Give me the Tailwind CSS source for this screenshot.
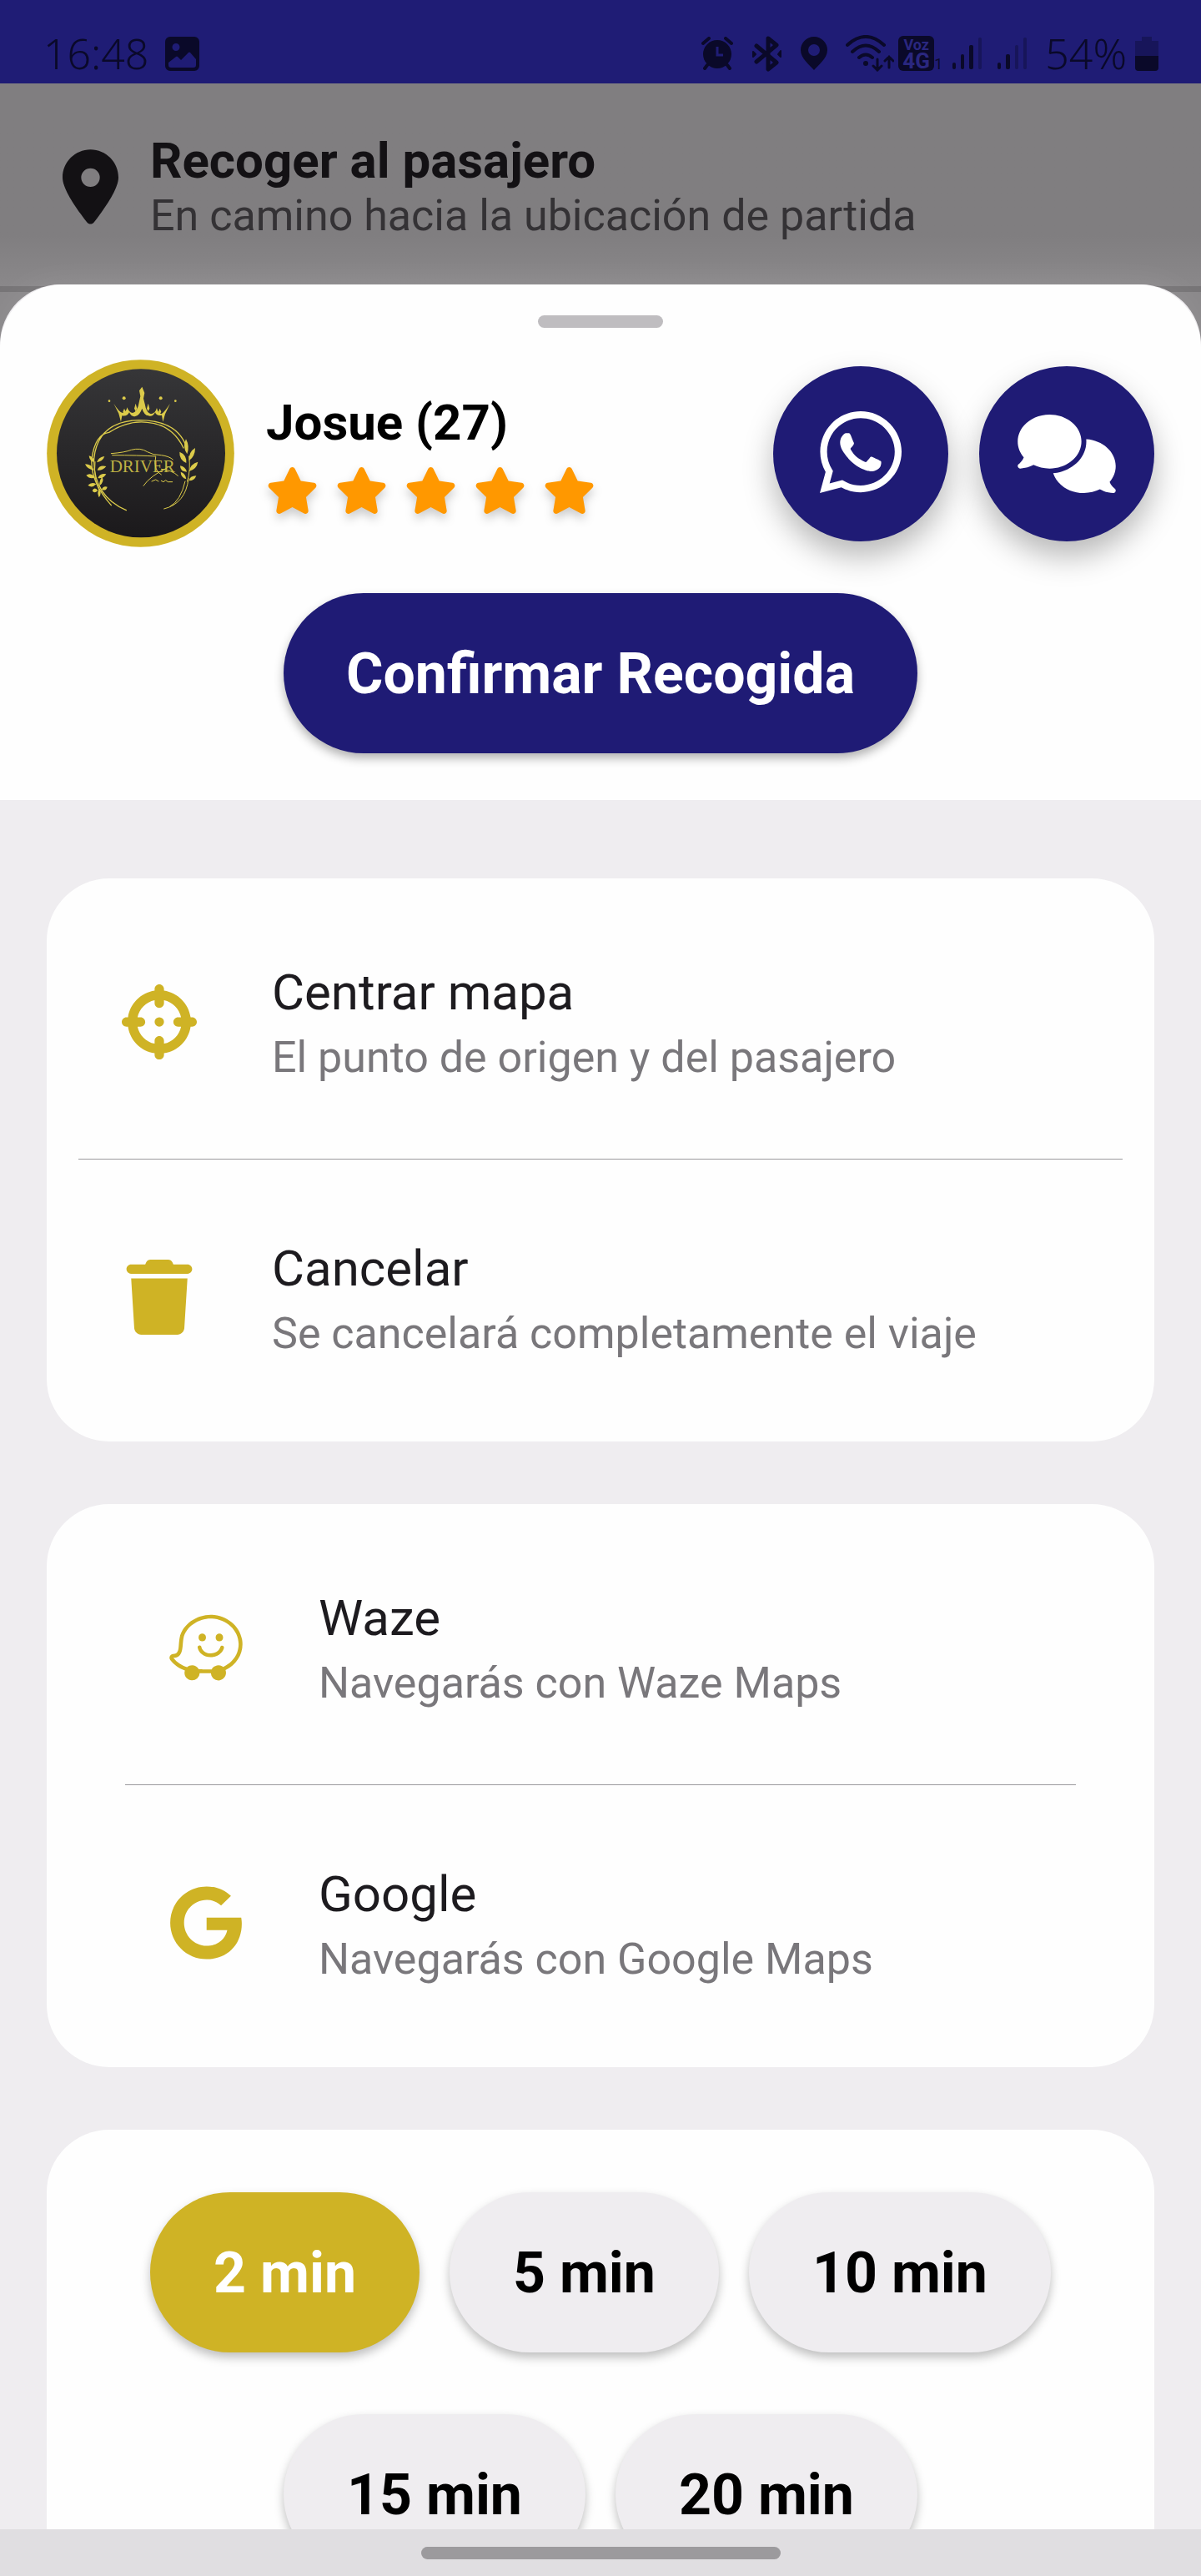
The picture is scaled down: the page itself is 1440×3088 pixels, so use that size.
<!DOCTYPE html>
<html lang="es">
<head>
    <meta charset="UTF-8">
    <meta name="viewport" content="width=device-width, initial-scale=1.0">
    <title>Recoger al pasajero</title>
    <script src="https://cdn.jsdelivr.net/npm/@tailwindcss/browser@4"></script>
</head>
<body class="h-screen overflow-hidden flex flex-col bg-[#efedf0] font-['Roboto',sans-serif]">

    <!-- Status bar -->
    <div class="h-[100px] shrink-0 bg-[#1f1c75] text-[#0a0929] flex justify-between items-center pt-7 pl-[52px] pr-[51px]">
        <div class="flex items-center gap-5">
            <span class="font-['Noto_Sans',sans-serif] text-[50px] leading-none font-light">16:48</span>
            <svg class="w-[41px] h-[41px]" viewBox="0 0 41 41" fill="currentColor" fill-rule="evenodd">
                <path d="M6 0h29a6 6 0 0 1 6 6v29a6 6 0 0 1-6 6H6a6 6 0 0 1-6-6V6a6 6 0 0 1 6-6zM13 8a4.500 4.500 0 1 0 0 9a4.500 4.500 0 1 0 0-9zM4 34q0 3 3 3h27q3 0 3-3v-7l-7-8q-1-1-2 0l-9 9-4-4q-1-1-2 0l-9 7z"/>
            </svg>
        </div>
        <div class="flex items-center gap-[22px]">
            <!-- Alarm -->
            <svg class="w-[38px] h-[40px]" viewBox="0 0 38 40">
                <circle cx="19" cy="21" r="17" fill="currentColor"/>
                <path d="M2 8l7-6M36 8l-7-6M7 34l-3 4M31 34l3 4" stroke="currentColor" stroke-width="4" stroke-linecap="round"/>
                <path d="M19 12v10h7" stroke="#1f1c75" stroke-width="3" fill="none"/>
            </svg>
            <!-- Bluetooth -->
            <svg class="w-[37px] h-[43px]" viewBox="0 0 37 43" fill="none" stroke="currentColor" stroke-width="5" stroke-linejoin="round" stroke-linecap="round">
                <path d="M6 12l24 20-10 8V3l10 8L6 31"/>
                <path d="M2 19l3 3-3 3zM35 18l-3 4 3 3z" fill="currentColor" stroke-width="2"/>
            </svg>
            <!-- Location -->
            <svg class="w-[32px] h-[40px]" viewBox="0 0 32 40" fill="currentColor" fill-rule="evenodd">
                <path d="M16 0a16 16 0 0 1 16 16c0 10-11 18-16 24C11 34 0 26 0 16A16 16 0 0 1 16 0zM16 9a7 7 0 1 0 0 14a7 7 0 1 0 0-14z"/>
            </svg>
            <div class="flex items-center gap-[5px]">
                <!-- Wifi -->
                <svg class="w-[58px] h-[44px]" viewBox="0 0 58 44" fill="none" stroke="currentColor" stroke-width="4" stroke-linecap="round">
                    <path d="M2 12Q24-8 46 12M8 20Q24 5 40 20M16 27Q24 20 32 27"/>
                    <circle cx="24" cy="34" r="3" fill="currentColor" stroke="none"/>
                    <path d="M38 29v13M33 37l5 5 5-5M52 39V26M47 31l5-5 5 5" stroke-width="3"/>
                </svg>
                <div class="flex items-end">
                    <div class="w-[43px] h-[42px] rounded-md bg-[#0a0929] text-[#2a2780] flex flex-col items-center justify-center font-bold">
                        <span class="text-[18px] leading-[17px]">Voz</span>
                        <span class="text-[26px] leading-[22px]">4G</span>
                    </div>
                    <span class="text-[18px] leading-[16px]">1</span>
                </div>
            </div>
            <div class="flex items-center gap-[19px] -ml-[10px]">
                <svg class="w-[35px] h-[38px]" viewBox="0 0 35 38" fill="currentColor">
                    <rect x="0" y="30" width="4" height="8" rx="2"/>
                    <rect x="10" y="20" width="4" height="18" rx="2"/>
                    <rect x="20" y="9" width="5" height="29" rx="2"/>
                    <rect x="31" y="0" width="4" height="38" rx="2" opacity=".35"/>
                </svg>
                <svg class="w-[35px] h-[38px]" viewBox="0 0 35 38" fill="currentColor">
                    <rect x="0" y="30" width="4" height="8" rx="2"/>
                    <rect x="10" y="20" width="5" height="18" rx="2"/>
                    <rect x="21" y="9" width="4" height="29" rx="2" opacity=".35"/>
                    <rect x="31" y="0" width="4" height="38" rx="2" opacity=".35"/>
                </svg>
            </div>
            <div class="flex items-center gap-[10px]">
                <span class="font-['Noto_Sans',sans-serif] text-[50px] leading-none font-light">54%</span>
                <svg class="w-[28px] h-[41px]" viewBox="0 0 28 41" fill="currentColor">
                    <path d="M8 0h12v5h8v18H0V5h8z" opacity=".35"/>
                    <path d="M0 23h28v14a4 4 0 0 1-4 4H4a4 4 0 0 1-4-4z"/>
                </svg>
            </div>
        </div>
    </div>

    <main class="flex-1 min-h-0 overflow-hidden bg-[#8a888a] flex flex-col">
        <!-- Trip header, dimmed behind the sheet -->
        <header class="shrink-0 flex items-center gap-[38px] pl-[75px] pt-[58px] pb-[54px] bg-linear-to-b from-[#807e80] from-75% to-[#8a888a] border-b-[7px] border-[#767476]">
            <svg class="w-[67px] h-[90px] text-[#131114]" viewBox="0 0 384 512" fill="currentColor"><path d="M215.7 499.2C267 435 384 279.4 384 192C384 86 298 0 192 0S0 86 0 192c0 87.4 117 243 168.3 307.2c12.3 15.3 35.1 15.3 47.4 0zM192 128a64 64 0 1 1 0 128 64 64 0 1 1 0-128z"/></svg>
            <div>
                <h1 class="text-[60px] leading-[70px] font-bold text-[#131114]">Recoger al pasajero</h1>
                <p class="text-[52px] leading-[61px] text-[#343235]">En camino hacia la ubicación de partida</p>
            </div>
        </header>

        <!-- Bottom sheet -->
        <section class="relative -mt-[9px] flex-1 min-h-0 overflow-hidden rounded-t-[72px] bg-[#efedf0] shadow-[0_-4px_40px_rgba(255,255,255,0.08)]">
            <div class="bg-[#fefefe] rounded-t-[76px] pt-[37px] pb-14 px-14">
                <div class="w-[150px] h-[15px] mx-auto rounded-full bg-[#bfbdc0]"></div>

                <div class="mt-[38px] flex items-center justify-between">
                    <div class="flex items-center gap-[38px]">
                        <svg class="w-[225px] h-[225px]" viewBox="48 32 675 675" role="img" aria-label="Driver">
                            <defs>
                                <linearGradient id="logoBg" x1="0" y1="0" x2="0" y2="1">
                                    <stop offset="0" stop-color="#363638"/>
                                    <stop offset="1" stop-color="#1b191b"/>
                                </linearGradient>
                            </defs>
                            <circle cx="385.500" cy="369.500" r="337" fill="#cfb325"/>
                            <circle cx="387" cy="369" r="303" fill="url(#logoBg)"/>
                            <g fill="#dccb4a" stroke="none">
                                <!-- crown -->
                                <path d="M391 130l9 22-4 20 5 20q5 32 22 36 16-2 21-22 4 18 16 22 10-5 32-38l-18 38-8 28-4-24q-18 5-24-10-10 18-24 12-16-2-23-26-8 24-24 28-14 4-22-14-8 16-26 12l-4 22-8-30-18-36q20 32 32 34 14-4 16-20 8 20 20 20 18-4 24-42l4-18-4-20z"/>
                                <circle cx="326" cy="171" r="6"/><circle cx="458" cy="171" r="6"/>
                                <circle cx="273" cy="181" r="4"/><circle cx="511" cy="181" r="4"/>
                                <path d="M368 190l5 18-5 10-5-10zM413 190l5 18-5 10-5-10zM327 208l5 12-5 8-5-8zM455 208l5 12-5 8-5-8z"/>
                                <!-- left laurel -->
                                <path d="M220 402q-2-20-20-24 2 20 20 24zM228 402q6-20 28-22-6 18-28 22zM218 430q-8-22-32-22 8 20 32 22zM230 430q6-20 32-14-12 16-32 14zM222 456q-16-20-32-8 14 16 32 8zM232 458q8-18 30-14-10 18-30 14zM226 480q-16-10-30 4 16 12 30-4zM238 486q-2-20 10-32 8 18-10 32zM232 502q-14-14-20 2 8 12 20-2zM246 500q4-14 20-10-4 16-20 10zM236 528q-8-18 0-30 12 14 0 30z"/>
                                <!-- right laurel -->
                                <path d="M553 372q-18-26-4-54 14 26 4 54zM560 396q-2-32 22-46 0 30-22 46zM550 404q-26-12-24-40 26 10 24 40zM560 434q6-28 32-34-4 26-32 34zM552 436q-24 0-24-22 18 2 24 22zM560 468q2-18 26-18-6 18-26 18zM550 462q-20-6-20-26 18 6 20 26z"/>
                            </g>
                            <g fill="none" stroke="#dccb4a" stroke-linecap="round">
                                <path d="M334 574Q214 522 218 388Q232 254 380 250Q520 250 552 350M280 556Q204 470 210 390Q222 300 272 294Q340 250 410 258Q500 266 540 350" stroke-width="4"/>
                                <path d="M558 460Q548 550 470 569M546 470Q530 540 490 562M222 400Q216 460 236 500M560 380Q566 430 554 470" stroke-width="3"/>
                                <!-- car outline -->
                                <path d="M280 370Q330 366 352 357Q386 348 410 364Q430 376 460 376Q490 380 502 392M284 376Q380 376 440 380M440 382Q430 430 460 446M484 420Q420 450 396 486M460 426Q500 430 520 450M426 470l14-6 10 6M460 468l8 4 8-6 8 6h16" stroke-width="3"/>
                            </g>
                            <text x="275" y="438" font-family="Liberation Serif, serif" font-size="63" fill="#dccb4a" fill-opacity=".85">DRIVER</text>
                        </svg>
                        <div>
                            <h2 class="text-[60px] leading-[70px] font-bold text-black">Josue (27)</h2>
                            <div class="mt-[18px] flex gap-5 text-[#ff9800]" id="stars" role="img" aria-label="5 estrellas"></div>
                        </div>
                    </div>
                    <div class="flex gap-[37px]">
                        <button aria-label="WhatsApp" class="size-[210px] rounded-full bg-[#1f1b75] text-white flex items-center justify-center pb-1 shadow-[0_18px_36px_rgba(0,0,0,0.28)]">
                            <svg class="w-[98px] h-[112px]" viewBox="0 0 448 512" fill="currentColor"><path d="M380.9 97.1C339 55.1 283.2 32 223.9 32c-122.4 0-222 99.6-222 222 0 39.1 10.2 77.3 29.6 111L0 480l117.7-30.9c32.4 17.7 68.9 27 106.1 27h.1c122.3 0 224.1-99.6 224.1-222 0-59.3-25.2-115-67.1-157zm-157 341.6c-33.2 0-65.7-8.9-94-25.7l-6.7-4-69.8 18.3L72 359.2l-4.4-7c-18.5-29.4-28.2-63.3-28.2-98.2 0-101.7 82.8-184.5 184.6-184.5 49.3 0 95.6 19.2 130.4 54.1 34.8 34.9 56.2 81.2 56.1 130.5 0 101.8-84.9 184.6-186.6 184.6zm101.2-138.2c-5.5-2.800-32.8-16.200-37.900-18-5.100-1.900-8.800-2.800-12.500 2.800-3.700 5.600-14.300 18-17.600 21.800-3.200 3.700-6.500 4.200-12 1.400-32.600-16.300-54-29.100-75.500-66-5.700-9.800 5.700-9.100 16.300-30.300 1.800-3.700.9-6.900-.5-9.700-1.400-2.800-12.500-30.100-17.100-41.200-4.500-10.800-9.100-9.300-12.500-9.500-3.200-.2-6.900-.2-10.600-.2-3.700 0-9.700 1.400-14.800 6.900-5.100 5.600-19.400 19-19.400 46.300 0 27.300 19.900 53.700 22.600 57.400 2.800 3.700 39.100 59.700 94.800 83.800 35.200 15.200 49 16.500 66.600 13.900 10.700-1.600 32.800-13.400 37.400-26.400 4.600-13 4.600-24.100 3.200-26.400-1.300-2.500-5-3.900-10.500-6.600z"/></svg>
                        </button>
                        <button aria-label="Chat" class="size-[210px] rounded-full bg-[#1f1b75] text-white flex items-center justify-center shadow-[0_18px_36px_rgba(0,0,0,0.28)]">
                            <svg class="w-[118px] h-[94px]" viewBox="0 0 640 512" fill="currentColor"><path d="M208 352c114.900 0 208-78.800 208-176S322.900 0 208 0S0 78.800 0 176c0 38.600 14.700 74.300 39.600 103.400c-3.500 9.400-8.700 17.700-14.200 24.700c-4.800 6.200-9.700 11-13.300 14.300c-1.800 1.600-3.300 2.900-4.300 3.700c-.5 .4-.9 .7-1.100 .8l-.2 .2C1 327.200-1.400 334.400 .8 340.900S9.100 352 16 352c21.800 0 43.800-5.600 62.100-12.500c9.200-3.500 17.800-7.400 25.200-11.400C134.100 343.300 169.800 352 208 352zM448 176c0 112.300-99.100 196.900-216.500 207C255.800 457.400 336.400 512 432 512c38.200 0 73.900-8.700 104.700-23.900c7.500 4 16 7.900 25.200 11.400c18.300 6.900 40.300 12.500 62.100 12.500c6.900 0 13.100-4.500 15.200-11.100c2.100-6.600-.2-13.800-5.800-17.900l-.2-.2c-.2-.2-.6-.4-1.100-.8c-1-.8-2.500-2-4.300-3.700c-3.600-3.300-8.500-8.100-13.300-14.300c-5.500-7-10.700-15.400-14.200-24.700c24.900-29 39.600-64.700 39.600-103.400c0-92.800-84.900-168.900-192.600-175.500c.4 5.100 .6 10.300 .6 15.500z"/></svg>
                        </button>
                    </div>
                </div>

                <div class="mt-[55px] flex justify-center">
                    <button class="px-[75px] pt-[57px] pb-[55px] rounded-full bg-[#1f1b75] text-white text-[68px] leading-[80px] font-bold shadow-[0_6px_12px_rgba(0,0,0,0.3)]">Confirmar Recogida</button>
                </div>
            </div>

            <div class="pt-[94px] px-14 flex flex-col gap-[75px]">
                <!-- Trip actions -->
                <div class="rounded-[75px] bg-[#fefefe] px-[38px] pt-[7px] pb-2">
                    <a href="#centrar" class="h-[330px] px-[52px] flex items-center gap-[90px] border-b border-[#9b999d]">
                        <svg class="w-[90px] h-[90px] shrink-0 text-[#cfb325]" viewBox="0 0 512 512" fill="currentColor"><path d="M256 0c17.700 0 32 14.300 32 32V42.400c93.700 13.900 167.700 88 181.600 181.600H480c17.700 0 32 14.300 32 32s-14.300 32-32 32H469.600c-13.900 93.700-88 167.700-181.600 181.600V480c0 17.700-14.300 32-32 32s-32-14.300-32-32V469.600C130.300 455.700 56.300 381.700 42.400 288H32c-17.700 0-32-14.300-32-32s14.300-32 32-32H42.400C56.300 130.300 130.300 56.300 224 42.400V32c0-17.700 14.300-32 32-32zM107.400 288c12.500 58.300 58.400 104.100 116.600 116.600V384c0-17.700 14.300-32 32-32s32 14.300 32 32v20.600c58.300-12.500 104.100-58.400 116.600-116.600H384c-17.700 0-32-14.300-32-32s14.300-32 32-32h20.600C392.100 165.700 346.300 119.900 288 107.400V128c0 17.700-14.300 32-32 32s-32-14.300-32-32V107.400C165.700 119.900 119.900 165.700 107.400 224H128c17.700 0 32 14.300 32 32s-14.300 32-32 32H107.400zM256 224a32 32 0 1 1 0 64 32 32 0 1 1 0-64z"/></svg>
                        <div class="pt-1">
                            <h3 class="text-[60px] leading-[70px] text-[#1d1b1f]">Centrar mapa</h3>
                            <p class="mt-3 text-[52px] leading-[61px] text-[#79777b]">El punto de origen y del pasajero</p>
                        </div>
                    </a>
                    <a href="#cancelar" class="h-[330px] px-[52px] flex items-center gap-[90px]">
                        <svg class="w-[90px] h-[90px] shrink-0 text-[#cfb325]" viewBox="0 0 448 512" fill="currentColor"><path d="M135.200 17.700L128 32H32C14.300 32 0 46.300 0 64S14.300 96 32 96H416c17.700 0 32-14.300 32-32s-14.300-32-32-32H320l-7.200-14.300C307.400 6.800 296.300 0 284.200 0H163.800c-12.100 0-23.200 6.800-28.600 17.700zM416 128H32L53.200 467c1.600 25.300 22.600 45 47.900 45H346.900c25.300 0 46.300-19.700 47.900-45L416 128z"/></svg>
                        <div class="pt-1">
                            <h3 class="text-[60px] leading-[70px] text-[#1d1b1f]">Cancelar</h3>
                            <p class="mt-3 text-[52px] leading-[61px] text-[#79777b]">Se cancelará completamente el viaje</p>
                        </div>
                    </a>
                </div>

                <!-- Navigation apps -->
                <div class="rounded-[75px] bg-[#fefefe] px-[94px] pt-[7px] pb-2">
                    <a href="#waze" class="h-[330px] px-[52px] flex items-center gap-[90px] border-b border-[#9b999d]">
                        <svg class="w-[90px] h-[90px] shrink-0 text-[#cfb325]" viewBox="0 0 512 512" fill="currentColor"><path d="M502.170 201.670C516.690 287.530 471.230 369.590 389 409.800c13 34.100-12.400 70.200-48.320 70.200a51.680 51.680 0 0 1-51.570-49c-6.440.19-64.200 0-76.330-.64A51.690 51.690 0 0 1 159 479.920c-33.860-1.360-57.950-34.840-47-67.920-37.210-13.110-72.540-34.870-99.620-70.800-13-17.280-.48-41.800 20.840-41.800 46.310 0 32.220-54.170 43.150-110.260C94.800 95.200 193.120 32 288.090 32c102.480 0 197.150 70.670 214.080 169.670zM373.510 388.280c42-19.180 81.330-56.710 96.290-102.140 40.480-123.090-64.150-228-181.710-228-83.450 0-170.320 55.420-186.070 136-9.530 48.910 5 131.350-68.750 131.350C58.210 358.600 91.600 378.110 127 389.540c24.660-21.800 63.870-15.470 79.830 14.340 14.220 1 79.190 1.180 87.900.82a51.690 51.690 0 0 1 78.780-16.420zM205.120 187.130c0-34.740 50.840-34.750 50.840 0s-50.840 34.740-50.840 0zm116.570 0c0-34.740 50.860-34.750 50.860 0s-50.860 34.750-50.860 0zm-122.610 70.690c-3.440-16.940 22.180-22.180 25.620-5.210l.06.28c4.140 21.420 29.850 44 64.120 43.070 35.680-.94 59.250-22.210 64.110-42.770 4.460-16.050 28.600-10.360 25.470 6-5.230 22.180-31.210 62-91.460 62.900-42.550 0-80.880-27.840-87.900-64.250z"/></svg>
                        <div class="pt-1">
                            <h3 class="text-[60px] leading-[70px] text-[#1d1b1f]">Waze</h3>
                            <p class="mt-3 text-[52px] leading-[61px] text-[#79777b]">Navegarás con Waze Maps</p>
                        </div>
                    </a>
                    <a href="#google" class="h-[330px] px-[52px] flex items-center gap-[90px]">
                        <svg class="w-[90px] h-[90px] shrink-0 text-[#cfb325]" viewBox="0 0 488 512" fill="currentColor"><path d="M488 261.800C488 403.300 391.100 504 248 504 110.800 504 0 393.200 0 256S110.800 8 248 8c66.800 0 123 24.500 166.300 64.900l-67.500 64.900C258.500 52.600 94.300 116.600 94.300 256c0 86.500 69.100 156.600 153.700 156.600 98.200 0 135-70.400 140.800-106.900H248v-85.300h236.100c2.300 12.700 3.900 24.900 3.900 41.400z"/></svg>
                        <div class="pt-1">
                            <h3 class="text-[60px] leading-[70px] text-[#1d1b1f]">Google</h3>
                            <p class="mt-3 text-[52px] leading-[61px] text-[#79777b]">Navegarás con Google Maps</p>
                        </div>
                    </a>
                </div>

                <!-- Arrival time -->
                <div class="rounded-[75px] bg-[#fefefe] p-[75px] flex flex-wrap justify-center gap-x-9 gap-y-[74px] text-[68px] leading-[80px] font-bold text-black">
                    <button class="time-btn px-[76px] pt-[57px] pb-[55px] rounded-full bg-[#cfb325] text-white shadow-[0_6px_12px_rgba(0,0,0,0.25)]">2 min</button>
                    <button class="time-btn px-[76px] pt-[57px] pb-[55px] rounded-full bg-[#efedf0] shadow-[0_6px_12px_rgba(0,0,0,0.25)]">5 min</button>
                    <button class="time-btn px-[76px] pt-[57px] pb-[55px] rounded-full bg-[#efedf0] shadow-[0_6px_12px_rgba(0,0,0,0.25)]">10 min</button>
                    <button class="time-btn px-[76px] pt-[57px] pb-[55px] rounded-full bg-[#efedf0] shadow-[0_6px_12px_rgba(0,0,0,0.25)]">15 min</button>
                    <button class="time-btn px-[76px] pt-[57px] pb-[55px] rounded-full bg-[#efedf0] shadow-[0_6px_12px_rgba(0,0,0,0.25)]">20 min</button>
                </div>
            </div>
        </section>
    </main>

    <!-- Gesture bar -->
    <div class="h-14 shrink-0 bg-[#e0dee1] flex items-center justify-center">
        <div class="w-[431px] h-[15px] rounded-full bg-[#9c9a9d]"></div>
    </div>

<script>
    const stars = document.getElementById("stars");
    for (let i = 0; i < 5; i++) {
        stars.innerHTML += `
            <svg class="w-[63px] h-[56px] drop-shadow-[0_6px_6px_rgba(0,0,0,0.2)]" viewBox="0 0 576 512" fill="currentColor"><path d="M316.900 18C311.600 7 300.400 0 288.100 0s-23.400 7-28.800 18L195 150.300 51.400 171.500c-12 1.800-22 10.200-25.700 21.700s-.7 24.200 7.900 32.700L137.800 329 113.200 474.700c-2 12 3 24.200 12.900 31.300s23 8 33.800 2.300l128.300-68.500 128.300 68.500c10.800 5.700 23.900 4.900 33.800-2.300s14.900-19.300 12.900-31.300L438.500 329 542.700 225.900c8.600-8.500 11.700-21.200 7.900-32.700s-13.700-19.900-25.700-21.700L381.200 150.300 316.900 18z"/></svg>`;
    }

    // Mark the chosen arrival time
    const timeButtons = document.querySelectorAll(".time-btn");
    timeButtons.forEach(btn => {
        btn.addEventListener("click", () => {
            timeButtons.forEach(b => {
                b.classList.remove("bg-[#cfb325]", "text-white");
                b.classList.add("bg-[#efedf0]");
            });
            btn.classList.remove("bg-[#efedf0]");
            btn.classList.add("bg-[#cfb325]", "text-white");
        });
    });
</script>
</body>
</html>
